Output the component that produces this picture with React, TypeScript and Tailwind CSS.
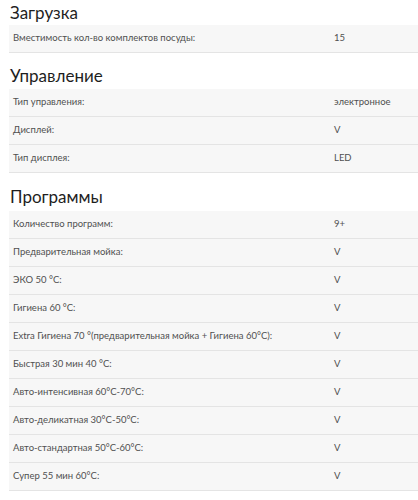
type Spec = { label: string; value: string };

const sections: { title: string; rows: Spec[] }[] = [
  {
    title: 'Загрузка',
    rows: [{ label: 'Вместимость кол-во комплектов посуды:', value: '15' }],
  },
  {
    title: 'Управление',
    rows: [
      { label: 'Тип управления:', value: 'электронное' },
      { label: 'Дисплей:', value: 'V' },
      { label: 'Тип дисплея:', value: 'LED' },
    ],
  },
  {
    title: 'Программы',
    rows: [
      { label: 'Количество программ:', value: '9+' },
      { label: 'Предварительная мойка:', value: 'V' },
      { label: 'ЭКО 50 °С:', value: 'V' },
      { label: 'Гигиена 60 °С:', value: 'V' },
      { label: 'Extra Гигиена 70 °(предварительная мойка + Гигиена 60°С):', value: 'V' },
      { label: 'Быстрая 30 мин 40 °С:', value: 'V' },
      { label: 'Авто-интенсивная 60°С-70°С:', value: 'V' },
      { label: 'Авто-деликатная 30°С-50°С:', value: 'V' },
      { label: 'Авто-стандартная 50°С-60°С:', value: 'V' },
      { label: 'Супер 55 мин 60°С:', value: 'V' },
    ],
  },
];

export default function App() {
  return (
    <div className="w-[418px] h-[500px] overflow-hidden bg-white pt-[2px] font-['Lato','Open_Sans',sans-serif]">
      {sections.map((section, i) => (
        <div key={section.title}>
          {/* section heading */}
          <h3
            className={`${i === 0 ? 'mt-0 mb-[1px]' : i === 1 ? 'mt-3 mb-[2px]' : 'mt-[13px] mb-[3px]'} pl-[10px] h-[22px] leading-[22px] text-[17px] text-[#1e1e1e]`}
          >
            {section.title}
          </h3>

          {/* spec table */}
          <div className="ml-[9px]">
            {section.rows.map((row) => (
              <div
                key={row.label}
                className="flex items-center h-[28px] bg-[#f7f7f7] border-b border-[#e4e4e4] text-[9.5px] text-[#505050]"
              >
                <span className="w-[325px] pl-[4px] whitespace-nowrap">{row.label}</span>
                <span>{row.value}</span>
              </div>
            ))}
          </div>
        </div>
      ))}
    </div>
  );
}
